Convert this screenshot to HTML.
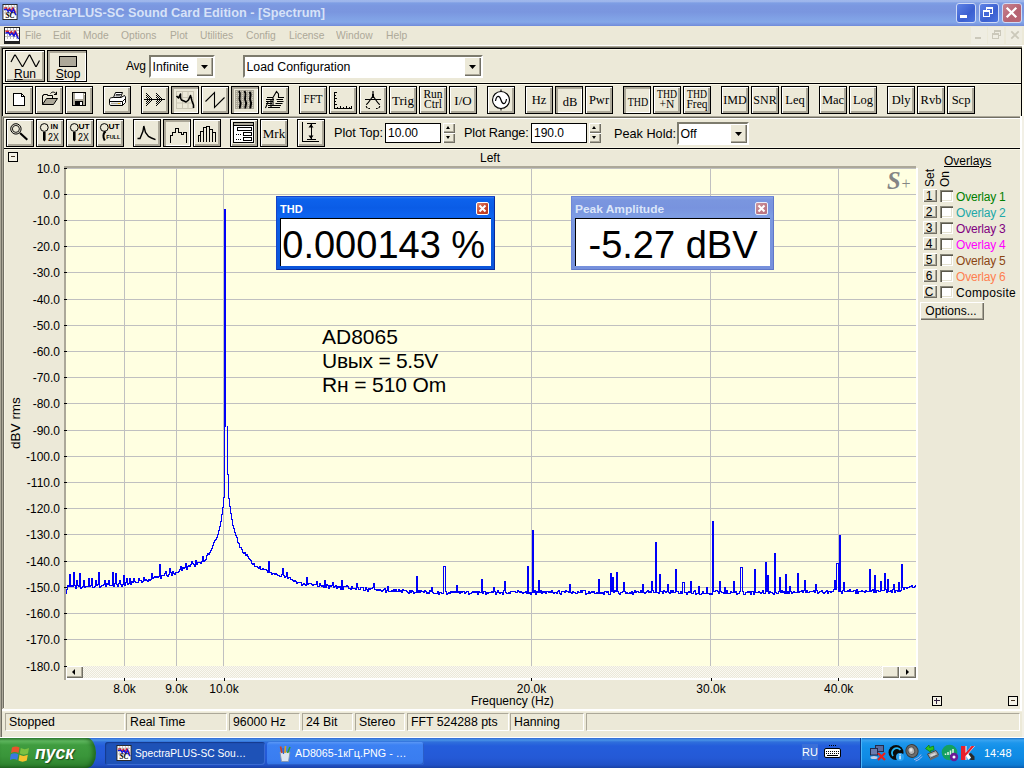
<!DOCTYPE html>
<html><head><meta charset="utf-8"><title>SpectraPLUS-SC</title>
<style>
*{box-sizing:border-box}
html,body{margin:0;padding:0}
body{width:1024px;height:768px;overflow:hidden;background:#ece9d8;font-family:"Liberation Sans",sans-serif;font-size:12px;color:#000;position:relative}
.a{position:absolute}
#title{left:0;top:0;width:1024px;height:26px;background:linear-gradient(to bottom,#9fb7ec 0,#9db5eb 1.5px,#7e9ee4 3px,#7b97e0 6px,#7a96df 12px,#7f9fe4 17px,#83a7e8 22px,#7c9ae2 24px,#6f8ad9 26px)}
#title .t{left:22px;top:3px;font-weight:bold;font-size:13.5px;color:#d6e2f8;white-space:nowrap;letter-spacing:0px;line-height:20px;transform:scaleX(.942);transform-origin:0 0}
.cb{top:2.5px;width:19.5px;height:20px;border-radius:3px;border:1px solid #cfdaf6}
#menu{left:0;top:26px;width:1024px;height:20px;background:#ece9d8}
#menu span{position:absolute;top:2px;color:#aca899;font-size:11px;line-height:14px;white-space:nowrap;transform:scaleX(.935);transform-origin:0 0}
.tb{position:absolute;width:28px;height:28px;background:#ece9d8;border:1px solid #000;box-shadow:inset 1px 1px 0 #fff,inset -1px -1px 0 #aca899,inset -2px -2px 0 #aca899}
.tb.p{box-shadow:inset 1px 1px 0 #aca899,inset 2px 2px 0 #aca899,inset -1px -1px 0 #fff;background:#ece9d8}
.tb svg{position:absolute;left:-1px;top:-1px}
.tb.p svg{left:0;top:0}
.lbl{position:absolute;font-size:12.7px;line-height:16px;white-space:nowrap}
.inp{position:absolute;background:#fff;border:1px solid #000;font-size:12px;line-height:18px;padding-left:2px;height:20px}
.combo{position:absolute;background:#fff;height:23px;border-style:solid;border-width:2px;border-color:#7d7b6d #fff #fff #7d7b6d;font-size:12.3px;line-height:20px;padding-left:1.5px;white-space:nowrap}
.dd{position:absolute;right:0;top:0;width:17px;height:19px;background:#ece9d8;box-shadow:inset 1px 1px 0 #fff,inset -1px -1px 0 #716f64,inset -2px -2px 0 #aca899}
.dd:after{content:"";position:absolute;left:5px;top:8px;width:7px;height:4px;background:#000;clip-path:polygon(0 0,100% 0,50% 100%)}
.spin{position:absolute;width:12px;height:20px}
.spin i{position:absolute;left:0;width:12px;height:10px;background:#ece9d8;box-shadow:inset 1px 1px 0 #fff,inset -1px -1px 0 #716f64,inset -2px -2px 0 #aca899}
.spin i:after{content:"";position:absolute;left:3px;top:3px;border:2.5px solid transparent}
.spin i.u:after{border-bottom:3px solid #000;border-top:none}
.spin i.d:after{border-top:3px solid #000;border-bottom:none;top:3px}
.yl{position:absolute;left:10px;width:50px;text-align:right;font-size:12px;line-height:15px}
.xl{position:absolute;top:682px;width:60px;text-align:center;font-size:12px;line-height:15px}
.ob{position:absolute;left:923px;width:14px;height:13px;background:#ece9d8;box-shadow:inset 1px 1px 0 #fff,inset -1px -1px 0 #716f64,inset -2px -2px 0 #aca899;font-size:12px;line-height:14px;overflow:hidden;text-align:center;padding-right:2px}
.oc{position:absolute;left:940px;width:13px;height:12px;background:#fff;box-shadow:inset 1px 1px 0 #8a887a,inset 2px 2px 0 #5a584c,inset -1px -1px 0 #fff,inset -2px -2px 0 #e4e1d0}
.ot{position:absolute;left:956px;font-size:12px;line-height:15px;white-space:nowrap;margin-top:1px}
.sp{position:absolute;top:713px;height:18px;border:1px solid;border-color:#aca899 #fff #fff #aca899;font-size:12.3px;line-height:16px;padding-left:3px;white-space:nowrap}
.mw{position:absolute;height:74px}
.mw .ti{position:absolute;left:4px;top:7px;font-weight:bold;font-size:11px;line-height:12px;white-space:nowrap}
.mw .x{position:absolute;top:6px;width:13px;height:13px;border:1px solid #fff;border-radius:2px}
.mw .v{position:absolute;left:4px;top:22px;bottom:4px;right:4px;background:#fff;border-top:1px solid #000;border-left:1px solid #000;font-size:38px;line-height:53px;white-space:nowrap;text-align:left;overflow:hidden}
.tk{position:absolute;top:742px;height:23px;border-radius:3px;color:#fff;font-size:11.5px;line-height:21px;white-space:nowrap}
</style></head><body>

<!-- title bar -->
<div id="title" class="a">
  <div class="a" style="left:2px;top:4px"><svg width="16" height="16" viewBox="0 0 16 17"><rect x="0.500" y="0.500" width="15" height="16" fill="#fff" stroke="#222"/><path d="M3.500 1 V12 M6.500 1 V12 M9.500 1 V12 M12.500 1 V12 M1 3.500 H15 M1 6.500 H15 M1 9.500 H15" stroke="#bbb" stroke-width="1"/><path d="M1.500 4.500 L4 4 L5.500 6.500 L7.500 4.500 L9 7.500 L11 4 L12.500 6.500 L14 9" fill="none" stroke="#e02020" stroke-width="1.3"/><path d="M1.500 6 L4.500 5.500 L6 8 L8 6 L10 9 L11.500 5.500 L13 9 L14.500 12" fill="none" stroke="#1010e0" stroke-width="1.400"/><text x="8" y="15" text-anchor="middle" font-family="Liberation Serif" font-style="italic" font-weight="bold" font-size="8" fill="#000">SC</text></svg></div>
  <div class="t a">SpectraPLUS-SC Sound Card Edition - [Spectrum]</div>
  <div class="cb a" style="left:956px;background:linear-gradient(135deg,#5f83e6,#3b5fd0 60%,#4a73e0)"><div class="a" style="left:3px;top:11px;width:7px;height:3px;background:#fff"></div></div>
  <div class="cb a" style="left:979px;background:linear-gradient(135deg,#5f83e6,#3b5fd0 60%,#4a73e0)">
    <div class="a" style="left:6px;top:3px;width:7px;height:7px;border:1px solid #fff;border-top-width:2px"></div>
    <div class="a" style="left:3px;top:6px;width:7px;height:7px;border:1px solid #fff;border-top-width:2px;background:#4468d8"></div>
  </div>
  <div class="cb a" style="left:1002px;background:linear-gradient(135deg,#c88390,#b56271 60%,#ba6674)">
    <svg class="a" style="left:0;top:0" width="18" height="18" viewBox="0 0 18 18"><path d="M3.700 3.700 L13.300 13.300 M13.300 3.700 L3.700 13.300" stroke="#fff" stroke-width="2.300"/></svg>
  </div>
</div>

<!-- menu bar -->
<div id="menu" class="a">
  <div class="a" style="left:4px;top:1px"><svg width="16" height="17" viewBox="0 0 16 17"><rect x="0.500" y="0.500" width="15" height="16" fill="#fff" stroke="#222"/><path d="M3.500 1 V12 M6.500 1 V12 M9.500 1 V12 M12.500 1 V12 M1 3.500 H15 M1 6.500 H15 M1 9.500 H15" stroke="#bbb" stroke-width="1"/><path d="M1.500 4.500 L4 4 L5.500 6.500 L7.500 4.500 L9 7.500 L11 4 L12.500 6.500 L14 9" fill="none" stroke="#e02020" stroke-width="1.3"/><path d="M1.500 6 L4.500 5.500 L6 8 L8 6 L10 9 L11.500 5.500 L13 9 L14.500 12" fill="none" stroke="#1010e0" stroke-width="1.400"/><rect x="1" y="14" width="14" height="2.500" fill="#222"/></svg></div>
  <span style="left:25px">File</span><span style="left:53px">Edit</span><span style="left:83px">Mode</span><span style="left:121px">Options</span>
  <span style="left:170px">Plot</span><span style="left:200px">Utilities</span><span style="left:246px">Config</span><span style="left:289px">License</span>
  <span style="left:336px">Window</span><span style="left:386px">Help</span>
  <div class="a" style="left:971px;top:1px;width:16px;height:17px;background:#efede2"></div><div class="a" style="left:988px;top:1px;width:16px;height:17px;background:#efede2"></div><div class="a" style="left:1006px;top:1px;width:16px;height:17px;background:#efede2"></div><div class="a" style="left:975px;top:11px;width:6px;height:2px;background:#cbc8ba"></div>
  <div class="a" style="left:994px;top:4px;width:7px;height:6px;border:1px solid #cbc8ba;border-top-width:2px"></div>
  <div class="a" style="left:992px;top:7px;width:7px;height:6px;border:1px solid #cbc8ba;border-top-width:2px;background:#efede2"></div>
  <svg class="a" style="left:1010px;top:4px" width="10" height="10" viewBox="0 0 10 10"><path d="M1.300 1.300 L8.700 8.700 M8.700 1.300 L1.300 8.700" stroke="#cbc8ba" stroke-width="1.800"/></svg>
</div>
<div class="a" style="left:0;top:45px;width:1024px;height:1px;background:#fff"></div>
<!-- window frame edges -->
<div class="a" style="left:0;top:46px;width:1022px;height:1px;background:#aca899"></div>
<div class="a" style="left:1px;top:47px;width:1021px;height:1px;background:#716f64"></div>
<div class="a" style="left:0;top:46px;width:1px;height:692px;background:#aca899"></div>
<div class="a" style="left:1px;top:47px;width:1px;height:691px;background:#716f64"></div>
<div class="a" style="left:1022px;top:46px;width:2px;height:70px;background:#fffef4"></div>
<div class="a" style="left:1022px;top:116px;width:2px;height:622px;background:#f2f0e6"></div>
<!-- toolbar frame (rows 1-2) -->
<div class="a" style="left:2px;top:48px;width:1020px;height:1px;background:#000"></div>
<div class="a" style="left:2px;top:49px;width:1019px;height:1px;background:#fbf8e8"></div>
<div class="a" style="left:2px;top:48px;width:1px;height:68px;background:#000"></div>
<div class="a" style="left:3px;top:49px;width:1px;height:67px;background:#fbf8e8"></div>
<div class="a" style="left:1021px;top:48px;width:1px;height:68px;background:#000"></div>
<div class="a" style="left:2px;top:83px;width:1020px;height:1px;background:#000"></div>
<div class="a" style="left:3px;top:84px;width:1018px;height:1px;background:#fbf8e8"></div>
<div class="a" style="left:3px;top:82px;width:1018px;height:1px;background:#fbf8e8"></div>
<!-- MDI child sunken edge -->
<div class="a" style="left:2px;top:116px;width:1018px;height:1px;background:#aca899"></div>
<div class="a" style="left:3px;top:117px;width:1017px;height:1px;background:#716f64"></div>
<div class="a" style="left:4px;top:118px;width:1016px;height:1px;background:#fff"></div>
<div class="a" style="left:2px;top:116px;width:1px;height:593px;background:#aca899"></div>
<div class="a" style="left:3px;top:117px;width:1px;height:591px;background:#716f64"></div>
<div class="a" style="left:4px;top:118px;width:1px;height:590px;background:#f6f3e4"></div>
<div class="a" style="left:1020px;top:116px;width:2px;height:595px;background:#fff"></div>
<div class="a" style="left:4px;top:148px;width:1016px;height:1px;background:#000"></div>
<div class="a" style="left:4px;top:147px;width:1016px;height:1px;background:#f8f5e6"></div>
<div class="a" style="left:4px;top:149px;width:1016px;height:1px;background:#fbf8e8"></div>

<!-- row 1 -->
<div class="tb" style="left:5px;top:50px;width:40px;height:32px"><svg width="40" height="32" viewBox="0 0 40 32"><path d="M6 12 L9.700 5 L10.300 5 L17.200 16.500 L17.800 16.500 L24.200 5 L24.800 5 L30.700 16.500 L31.300 16.500 L34.500 10.500" fill="none" stroke="#000" stroke-width="1.2" stroke-linejoin="round"/></svg><div class="a" style="left:0;top:15px;width:38px;text-align:center;font-size:12px;line-height:16px"><u>R</u>un</div></div>
<div class="tb p" style="left:47px;top:50px;width:40px;height:32px"><div class="a" style="left:11px;top:5px;width:18px;height:11px;background:#aca899;border:1px solid #000"></div><div class="a" style="left:1px;top:15px;width:38px;text-align:center;font-size:12px;line-height:16px"><u>S</u>top</div></div>
<div class="lbl" style="left:126px;top:58px;font-size:12px;letter-spacing:-0.3px">Avg</div>
<div class="combo" style="left:149px;top:55px;width:66px">Infinite<div class="dd"></div></div>
<div class="combo" style="left:243px;top:55px;width:240px">Load Configuration<div class="dd"></div></div>

<!-- rows 2,3 -->
<div class="tb" style="left:5px;top:86px"><svg width="28" height="28" viewBox="0 0 28 28" shape-rendering="crispEdges"><path d="M8.5 7.5 H16.5 L19.5 10.5 V19.5 H8.5 Z" fill="#fff" stroke="#000" stroke-width="1"/><path d="M16.5 7.5 V10.5 H19.5" fill="none" stroke="#000" stroke-width="1"/></svg></div><div class="tb" style="left:35px;top:86px"><svg width="28" height="28" viewBox="0 0 28 28" ><path d="M7.5 18.5 V9.5 H8.5 V8.5 H12.5 V9.5 H17.5 V12.5" fill="#ece9d8" stroke="#000" stroke-width="1"/><path d="M7.5 18.5 L11.5 12.5 H22.5 L18.5 18.5 Z" fill="#aca899" stroke="#000" stroke-width="1"/><path d="M15.5 7.5 C17 5.5 20 5.5 21.5 8.5 M21.5 8.5 V5.8 M21.5 8.5 H19" fill="none" stroke="#000" stroke-width="1"/></svg></div><div class="tb" style="left:65px;top:86px"><svg width="28" height="28" viewBox="0 0 28 28" shape-rendering="crispEdges"><rect x="7.5" y="6.5" width="13" height="13" fill="#aca899" stroke="#000"/><rect x="10" y="7" width="8" height="6" fill="#fff"/><rect x="10" y="15" width="8" height="4" fill="#000"/><rect x="15" y="16" width="2" height="3" fill="#fff"/><rect x="19" y="8" width="1" height="1" fill="#fff"/></svg></div><div class="tb" style="left:103px;top:86px"><svg width="28" height="28" viewBox="0 0 28 28" ><path d="M10.5 11.5 L12.5 6.5 H19.5 L17.5 11.5 Z" fill="#fff" stroke="#000"/><path d="M13 8.5 H18 M12.5 9.8 H17" stroke="#000" stroke-width="0.8"/><path d="M6.5 14 C6.5 12 8 11.5 10.5 11.5 H18 L21.5 9.5 L22.5 11 V16.5 L19.5 19.5 H8 C6.5 19.5 6.5 18 6.5 17 Z" fill="#fff" stroke="#000"/><path d="M6.5 15.5 H19.5 L22.5 12.5 M19.5 15.5 V19.5" fill="none" stroke="#000"/><path d="M8 17.5 H18" stroke="#aca899" stroke-width="1.6"/><rect x="15" y="17" width="2" height="1" fill="#d8a000"/></svg></div><div class="tb" style="left:141px;top:86px"><svg width="28" height="28" viewBox="0 0 28 28" shape-rendering="crispEdges"><defs><pattern id="dt" width="2" height="2" patternUnits="userSpaceOnUse"><rect width="1" height="1" fill="#000"/><rect x="1" y="1" width="1" height="1" fill="#000"/></pattern></defs><path d="M5 5 L13 13.5 L5 22 Z" fill="url(#dt)"/><path d="M15 7 L22 13.5 L15 20 Z" fill="url(#dt)"/><path d="M3 13.5 H24" stroke="#000" stroke-width="1"/></svg></div><div class="tb p" style="left:171px;top:86px"><svg width="28" height="28" viewBox="0 0 28 28" ><g transform="translate(-1,-1)"><rect x="5.5" y="5.5" width="17" height="17" fill="#ece9d8" stroke="#c9c5b4" stroke-width="1"/><path d="M11.5 5.5 V22.5 M17 5.5 V22.5 M5.5 11.5 H22.5 M5.5 17 H22.5" stroke="#c9c5b4" stroke-width="1"/><path d="M5.5 10 L7.5 12 L9.5 8 V12 L10.5 14 L13 15 L15 16 L17.5 14 L19.5 9.5 L21 15 L22.5 19 V22" fill="none" stroke="#000" stroke-width="1.6" stroke-linejoin="round"/></g></svg></div><div class="tb" style="left:201px;top:86px"><svg width="28" height="28" viewBox="0 0 28 28" ><path d="M4.500 15.5 L13.5 6.5 V21.5 L23.5 11.500" fill="none" stroke="#000" stroke-width="1.1"/></svg></div><div class="tb p" style="left:231px;top:86px"><svg width="28" height="28" viewBox="0 0 28 28" ><defs><pattern id="dt2" width="2" height="2" patternUnits="userSpaceOnUse"><rect width="2" height="2" fill="#aca899"/><rect width="1" height="1" fill="#d8d4c4"/></pattern></defs><rect x="3" y="3" width="19" height="19" fill="url(#dt2)" shape-rendering="crispEdges"/><path d="M7 4 C10 8 6 11 8 14 C10 17 7 19 8 21.500" fill="none" stroke="#000" stroke-width="1.9"/><path d="M12.500 4 C15.500 8 11.500 11 13.500 14 C15.500 17 12.500 19 13.500 21.500" fill="none" stroke="#000" stroke-width="1.9"/><path d="M17.500 5 C20.500 8 16.500 11 18.500 14 C20.500 17 17.500 19 18.500 21.500" fill="none" stroke="#000" stroke-width="1.9"/></svg></div><div class="tb" style="left:261px;top:86px"><svg width="28" height="28" viewBox="0 0 28 28" ><path d="M6 11.500 H12 L15.500 5.500 L17.500 8 V11.500 H23 M5 13.500 H13 M15.500 13.500 H22 M5 15.500 H12 M16 15.500 H22.500 M5 17.500 H11 M14.500 17.500 H21.500 M7 19.500 H20 M7 21.500 H19 M4.500 22 L7 16 M12 12 V19 M10 14 V21" fill="none" stroke="#000" stroke-width="1.1"/></svg></div><div class="tb" style="left:299px;top:86px"><svg width="28" height="28" viewBox="0 0 28 28" ><text x="14" y="16.8" text-anchor="middle" font-family="Liberation Serif" font-size="11.5" font-weight="normal" letter-spacing="0" fill="#000" textLength="19" lengthAdjust="spacingAndGlyphs">FFT</text></svg></div><div class="tb" style="left:329px;top:86px"><svg width="28" height="28" viewBox="0 0 28 28" ><path d="M5.5 6 V22.5 H23 M5.5 6.5 H8 M5.5 9.5 H7 M5.5 12.5 H8 M5.5 15.5 H7 M5.5 18.5 H8 M8.5 22.5 V21 M11.5 22.5 V20 M14.5 22.5 V21 M17.5 22.5 V20 M20.5 22.5 V21 M22.5 22.5 V19.5" fill="none" stroke="#000" stroke-width="1" shape-rendering="crispEdges"/></svg></div><div class="tb" style="left:359px;top:86px"><svg width="28" height="28" viewBox="0 0 28 28" ><path d="M14 5 V11 M6 13.500 H22 M14 10 L9 17 M14 10 L19 17" fill="none" stroke="#000" stroke-width="1.2"/><path d="M9 17 C6 19 7 23 11 22.500 M19 17 C22 19 21 23 17 22.500" fill="none" stroke="#000" stroke-width="1.1" stroke-dasharray="2.5 1"/><rect x="13" y="8" width="2" height="4" fill="#000"/></svg></div><div class="tb" style="left:389px;top:86px"><svg width="28" height="28" viewBox="0 0 28 28" ><text x="14" y="18.5" text-anchor="middle" font-family="Liberation Serif" font-size="13" font-weight="normal" letter-spacing="0" fill="#000">Trig</text></svg></div><div class="tb" style="left:419px;top:86px"><svg width="28" height="28" viewBox="0 0 28 28" ><text x="14" y="11.5" text-anchor="middle" font-family="Liberation Serif" font-size="11.5" font-weight="normal" letter-spacing="0" fill="#000">Run</text><text x="14" y="21.5" text-anchor="middle" font-family="Liberation Serif" font-size="11.5" font-weight="normal" letter-spacing="0" fill="#000">Ctrl</text></svg></div><div class="tb" style="left:449px;top:86px"><svg width="28" height="28" viewBox="0 0 28 28" ><text x="14" y="18.5" text-anchor="middle" font-family="Liberation Serif" font-size="13" font-weight="normal" letter-spacing="0" fill="#000">I/O</text></svg></div><div class="tb" style="left:487px;top:86px"><svg width="28" height="28" viewBox="0 0 28 28" ><circle cx="14" cy="14" r="8.5" fill="#fff" stroke="#000" stroke-width="1.1"/><path d="M14 3.500 V5.500 M14 22.500 V24.500" stroke="#000" stroke-width="1.1"/><path d="M8.500 15 C9.500 9 12.500 9 14 14 C15.500 19 18.500 19 19.500 13" fill="none" stroke="#000" stroke-width="1.2"/></svg></div><div class="tb" style="left:525px;top:86px"><svg width="28" height="28" viewBox="0 0 28 28" ><text x="14" y="18.0" text-anchor="middle" font-family="Liberation Serif" font-size="12.5" font-weight="normal" letter-spacing="0" fill="#000">Hz</text></svg></div><div class="tb p" style="left:555px;top:86px"><svg width="28" height="28" viewBox="0 0 28 28" ><text x="14" y="19.0" text-anchor="middle" font-family="Liberation Serif" font-size="12.5" font-weight="normal" letter-spacing="0" fill="#000">dB</text></svg></div><div class="tb" style="left:585px;top:86px"><svg width="28" height="28" viewBox="0 0 28 28" ><text x="14" y="18.0" text-anchor="middle" font-family="Liberation Serif" font-size="12.5" font-weight="normal" letter-spacing="0" fill="#000">Pwr</text></svg></div><div class="tb p" style="left:623px;top:86px"><svg width="28" height="28" viewBox="0 0 28 28" ><text x="14" y="18.5" text-anchor="middle" font-family="Liberation Serif" font-size="12" font-weight="normal" letter-spacing="0" fill="#000" textLength="20.5" lengthAdjust="spacingAndGlyphs">THD</text></svg></div><div class="tb" style="left:653px;top:86px"><svg width="28" height="28" viewBox="0 0 28 28" ><text x="14" y="11.5" text-anchor="middle" font-family="Liberation Serif" font-size="11.5" font-weight="normal" letter-spacing="0" fill="#000" textLength="20" lengthAdjust="spacingAndGlyphs">THD</text><text x="14" y="21.5" text-anchor="middle" font-family="Liberation Serif" font-size="11.5" font-weight="normal" letter-spacing="0" fill="#000">+N</text></svg></div><div class="tb" style="left:683px;top:86px"><svg width="28" height="28" viewBox="0 0 28 28" ><text x="14" y="11.5" text-anchor="middle" font-family="Liberation Serif" font-size="11.5" font-weight="normal" letter-spacing="0" fill="#000" textLength="20" lengthAdjust="spacingAndGlyphs">THD</text><text x="14" y="21.5" text-anchor="middle" font-family="Liberation Serif" font-size="11.5" font-weight="normal" letter-spacing="0" fill="#000">Freq</text></svg></div><div class="tb" style="left:721px;top:86px"><svg width="28" height="28" viewBox="0 0 28 28" ><text x="14" y="18.0" text-anchor="middle" font-family="Liberation Serif" font-size="12" font-weight="normal" letter-spacing="0" fill="#000">IMD</text></svg></div><div class="tb" style="left:751px;top:86px"><svg width="28" height="28" viewBox="0 0 28 28" ><text x="14" y="18.0" text-anchor="middle" font-family="Liberation Serif" font-size="12" font-weight="normal" letter-spacing="0" fill="#000">SNR</text></svg></div><div class="tb" style="left:781px;top:86px"><svg width="28" height="28" viewBox="0 0 28 28" ><text x="14" y="18.0" text-anchor="middle" font-family="Liberation Serif" font-size="12.5" font-weight="normal" letter-spacing="0" fill="#000">Leq</text></svg></div><div class="tb" style="left:819px;top:86px"><svg width="28" height="28" viewBox="0 0 28 28" ><text x="14" y="18.0" text-anchor="middle" font-family="Liberation Serif" font-size="12.5" font-weight="normal" letter-spacing="0" fill="#000">Mac</text></svg></div><div class="tb" style="left:849px;top:86px"><svg width="28" height="28" viewBox="0 0 28 28" ><text x="14" y="18.0" text-anchor="middle" font-family="Liberation Serif" font-size="12.5" font-weight="normal" letter-spacing="0" fill="#000">Log</text></svg></div><div class="tb" style="left:887px;top:86px"><svg width="28" height="28" viewBox="0 0 28 28" ><text x="14" y="18.0" text-anchor="middle" font-family="Liberation Serif" font-size="12.5" font-weight="normal" letter-spacing="0" fill="#000">Dly</text></svg></div><div class="tb" style="left:917px;top:86px"><svg width="28" height="28" viewBox="0 0 28 28" ><text x="14" y="18.0" text-anchor="middle" font-family="Liberation Serif" font-size="12.5" font-weight="normal" letter-spacing="0" fill="#000">Rvb</text></svg></div><div class="tb" style="left:947px;top:86px"><svg width="28" height="28" viewBox="0 0 28 28" ><text x="14" y="18.0" text-anchor="middle" font-family="Liberation Serif" font-size="12.5" font-weight="normal" letter-spacing="0" fill="#000">Scp</text></svg></div><div class="tb" style="left:6px;top:119px"><svg width="28" height="28" viewBox="0 0 28 28" ><circle cx="9.900" cy="9.900" r="5.200" fill="none" stroke="#000" stroke-width="1"/><circle cx="9.900" cy="9.900" r="3.500" fill="none" stroke="#000" stroke-width="0.9"/><path d="M14 14 L21.300 20.800" stroke="#000" stroke-width="2.1"/></svg></div><div class="tb" style="left:36px;top:119px"><svg width="28" height="28" viewBox="0 0 28 28" ><circle cx="8.300" cy="8.500" r="3.900" fill="none" stroke="#000" stroke-width="1"/><path d="M7 13 H9.600 V21 L8.300 22.600 L7 21 Z" fill="#000"/><text x="14.6" y="10.3" font-family="Liberation Sans" font-size="7" font-weight="bold" fill="#000" textLength="7.4" lengthAdjust="spacingAndGlyphs">IN</text><text x="12" y="22" font-family="Liberation Sans" font-size="10.5" fill="#000" textLength="10.800" lengthAdjust="spacingAndGlyphs">2X</text></svg></div><div class="tb" style="left:66px;top:119px"><svg width="28" height="28" viewBox="0 0 28 28" ><circle cx="8.300" cy="8.500" r="3.900" fill="none" stroke="#000" stroke-width="1"/><path d="M7 13 H9.600 V21 L8.300 22.600 L7 21 Z" fill="#000"/><text x="12.5" y="10.3" font-family="Liberation Sans" font-size="7" font-weight="bold" fill="#000" textLength="11.2" lengthAdjust="spacingAndGlyphs">UT</text><text x="12" y="22" font-family="Liberation Sans" font-size="10.5" fill="#000" textLength="10.800" lengthAdjust="spacingAndGlyphs">2X</text></svg></div><div class="tb" style="left:96px;top:119px"><svg width="28" height="28" viewBox="0 0 28 28" ><circle cx="8.300" cy="8.500" r="3.900" fill="none" stroke="#000" stroke-width="1"/><path d="M9.500 12.300 C7 14.500 7 18.500 8.800 21.500" stroke="#000" stroke-width="2.2" fill="none"/><text x="12.500" y="10.300" font-family="Liberation Sans" font-size="7" font-weight="bold" fill="#000" textLength="11.200" lengthAdjust="spacingAndGlyphs">UT</text><text x="10.300" y="20.200" font-family="Liberation Sans" font-size="6.200" font-weight="bold" fill="#000" textLength="14" lengthAdjust="spacingAndGlyphs">FULL</text></svg></div><div class="tb" style="left:133px;top:119px"><svg width="28" height="28" viewBox="0 0 28 28" ><path d="M4.500 19.500 H7 L10 12 L10.800 7 L12.500 13.500 L15.500 17.500 L18.500 19 L22.500 20.700" fill="none" stroke="#000" stroke-width="1.4"/></svg></div><div class="tb p" style="left:163px;top:119px"><svg width="28" height="28" viewBox="0 0 28 28" ><path d="M6.500 22.500 V15.500 H8.500 V12.500 H11.500 V8.500 H14.500 V12.500 H17.500 V14.500 H19.500 V12.500 H22.500 V22.500" fill="none" stroke="#000" stroke-width="1" shape-rendering="crispEdges"/></svg></div><div class="tb" style="left:193px;top:119px"><svg width="28" height="28" viewBox="0 0 28 28" ><path d="M5.500 22.500 V16.500 H7.500 V22.500 M7.500 16.500 V12.500 H10.500 V22.500 M10.500 12.500 V8.500 H13.500 V22.500 M13.500 8.500 V7.500 H16.500 V22.500 M16.500 10.500 H19.500 V22.500 M19.500 13.500 H22.500 V22.500" fill="none" stroke="#000" stroke-width="1" shape-rendering="crispEdges"/></svg></div><div class="tb" style="left:230px;top:119px"><svg width="28" height="28" viewBox="0 0 28 28" shape-rendering="crispEdges"><rect x="3.500" y="3.500" width="20" height="20" fill="#fff" stroke="#000"/><rect x="4" y="4" width="19" height="2" fill="#aca899"/><path d="M3.500 6.500 H23.500" stroke="#000"/><rect x="7.500" y="8.500" width="14" height="3" fill="#fff" stroke="#000"/><rect x="13.500" y="13.500" width="8" height="3" fill="#fff" stroke="#000"/><rect x="13.500" y="18.500" width="8" height="3" fill="#fff" stroke="#000"/><path d="M6 15.500 H12 M6 20.500 H12" stroke="#000" stroke-dasharray="1 1"/></svg></div><div class="tb" style="left:260px;top:119px"><svg width="28" height="28" viewBox="0 0 28 28" ><text x="14" y="18.5" text-anchor="middle" font-family="Liberation Serif" font-size="13" font-weight="normal" letter-spacing="0" fill="#000">Mrk</text></svg></div><div class="tb" style="left:297px;top:119px"><svg width="28" height="28" viewBox="0 0 28 28" ><path d="M5.500 3 V22.500 H22 M9.500 4.500 H18.500 M9.500 20.500 H18.500 M14 4.500 V20.500" fill="none" stroke="#000" stroke-width="1" shape-rendering="crispEdges"/><path d="M11.500 8.500 L14 5 L16.500 8.500 Z M11.500 16.500 L14 20 L16.500 16.500 Z" fill="#000"/></svg></div>
<div class="lbl" style="left:334px;top:125px">Plot Top:</div>
<div class="inp" style="left:385px;top:123px;width:56px">10.00</div>
<div class="spin" style="left:443px;top:123px"><i class="u" style="top:0"></i><i class="d" style="top:10px"></i></div>
<div class="lbl" style="left:464px;top:125px;letter-spacing:-0.15px">Plot Range:</div>
<div class="inp" style="left:531px;top:123px;width:56px">190.0</div>
<div class="spin" style="left:589px;top:123px"><i class="u" style="top:0"></i><i class="d" style="top:10px"></i></div>
<div class="lbl" style="left:614px;top:126px">Peak Hold:</div>
<div class="combo" style="left:677px;top:122px;width:72px">Off<div class="dd"></div></div>

<!-- plot -->
<div class="a" style="left:8px;top:152px;width:10px;height:10px;border:1px solid #000;background:#f4f2e6"><div class="a" style="left:2px;top:3px;width:4px;height:1px;background:#403020"></div></div>
<div class="lbl" style="left:480px;top:151px;font-size:12px;line-height:14px">Left</div>
<div class="a" style="left:64px;top:168px;width:854px;height:512px;background:#fff"></div>
<div class="a" style="left:64px;top:166px;width:852px;height:514px;background:#aca899"></div>
<div class="a" style="left:66px;top:168px;width:850px;height:498px;background:#ffffe1"></div>
<div class="a" style="left:66px;top:678px;width:852px;height:2px;background:#fff"></div>
<!-- scrollbar -->
<div class="a" style="left:66px;top:666px;width:850px;height:12px;background:#faf9f2;background-image:linear-gradient(45deg,#ebe8d9 25%,transparent 25%,transparent 75%,#ebe8d9 75%),linear-gradient(45deg,#ebe8d9 25%,transparent 25%,transparent 75%,#ebe8d9 75%);background-size:2px 2px;background-position:0 0,1px 1px"></div>
<div class="a" style="left:66px;top:666px;width:17px;height:12px;background:#ece9d8;box-shadow:inset 1px 1px 0 #fff,inset -1px -1px 0 #716f64,inset -2px -2px 0 #aca899"><div class="a" style="left:6px;top:3px;border:3px solid transparent;border-right:3px solid #000;border-left:none"></div></div>
<div class="a" style="left:882px;top:666px;width:17px;height:12px;background:#ece9d8;box-shadow:inset 1px 1px 0 #fff,inset -1px -1px 0 #716f64,inset -2px -2px 0 #aca899"></div>
<div class="a" style="left:899px;top:666px;width:17px;height:12px;background:#ece9d8;box-shadow:inset 1px 1px 0 #fff,inset -1px -1px 0 #716f64,inset -2px -2px 0 #aca899"><div class="a" style="left:7px;top:3px;border:3px solid transparent;border-left:3px solid #000;border-right:none"></div></div>

<svg class="a" style="left:0;top:0" width="1024" height="768" viewBox="0 0 1024 768">
<g shape-rendering="crispEdges"><rect x="66" y="168" width="850" height="1" fill="#c0c0c0"/><rect x="66" y="194" width="850" height="1" fill="#c0c0c0"/><rect x="66" y="220" width="850" height="1" fill="#c0c0c0"/><rect x="66" y="246" width="850" height="1" fill="#c0c0c0"/><rect x="66" y="272" width="850" height="1" fill="#c0c0c0"/><rect x="66" y="299" width="850" height="1" fill="#c0c0c0"/><rect x="66" y="325" width="850" height="1" fill="#c0c0c0"/><rect x="66" y="351" width="850" height="1" fill="#c0c0c0"/><rect x="66" y="377" width="850" height="1" fill="#c0c0c0"/><rect x="66" y="403" width="850" height="1" fill="#c0c0c0"/><rect x="66" y="430" width="850" height="1" fill="#c0c0c0"/><rect x="66" y="456" width="850" height="1" fill="#c0c0c0"/><rect x="66" y="482" width="850" height="1" fill="#c0c0c0"/><rect x="66" y="508" width="850" height="1" fill="#c0c0c0"/><rect x="66" y="534" width="850" height="1" fill="#c0c0c0"/><rect x="66" y="561" width="850" height="1" fill="#c0c0c0"/><rect x="66" y="587" width="850" height="1" fill="#c0c0c0"/><rect x="66" y="613" width="850" height="1" fill="#c0c0c0"/><rect x="66" y="639" width="850" height="1" fill="#c0c0c0"/><rect x="124" y="169" width="1" height="497" fill="#c0c0c0"/><rect x="176" y="169" width="1" height="497" fill="#c0c0c0"/><rect x="223" y="169" width="1" height="497" fill="#c0c0c0"/><rect x="531" y="169" width="1" height="497" fill="#c0c0c0"/><rect x="710" y="169" width="1" height="497" fill="#c0c0c0"/><rect x="838" y="169" width="1" height="497" fill="#c0c0c0"/><rect x="64" y="168" width="3" height="1" fill="#000"/><rect x="64" y="194" width="3" height="1" fill="#000"/><rect x="64" y="220" width="3" height="1" fill="#000"/><rect x="64" y="246" width="3" height="1" fill="#000"/><rect x="64" y="272" width="3" height="1" fill="#000"/><rect x="64" y="299" width="3" height="1" fill="#000"/><rect x="64" y="325" width="3" height="1" fill="#000"/><rect x="64" y="351" width="3" height="1" fill="#000"/><rect x="64" y="377" width="3" height="1" fill="#000"/><rect x="64" y="403" width="3" height="1" fill="#000"/><rect x="64" y="430" width="3" height="1" fill="#000"/><rect x="64" y="456" width="3" height="1" fill="#000"/><rect x="64" y="482" width="3" height="1" fill="#000"/><rect x="64" y="508" width="3" height="1" fill="#000"/><rect x="64" y="534" width="3" height="1" fill="#000"/><rect x="64" y="561" width="3" height="1" fill="#000"/><rect x="64" y="587" width="3" height="1" fill="#000"/><rect x="64" y="613" width="3" height="1" fill="#000"/><rect x="64" y="639" width="3" height="1" fill="#000"/><rect x="64" y="666" width="3" height="1" fill="#000"/><rect x="124" y="678" width="1" height="3" fill="#000"/><rect x="176" y="678" width="1" height="3" fill="#000"/><rect x="224" y="678" width="1" height="3" fill="#000"/><rect x="531" y="678" width="1" height="3" fill="#000"/><rect x="711" y="678" width="1" height="3" fill="#000"/><rect x="838" y="678" width="1" height="3" fill="#000"/></g>
<g shape-rendering="crispEdges"><path d="M66.5 593.5H66.5V589.5H67.5V585.5H68.5V586.5H69.5V574.5H70.5V586.5H71.5V585.5H72.5V586.5H73.5V572.5H74.5V585.5H75.5V588.5H76.5V580.5H77.5V585.5H78.5V586.5H79.5V573.5H80.5V588.5H81.5V587.5H82.5V586.5H83.5V580.5H84.5V587.5H85.5V586.5H86.5H87.5H88.5V578.5H89.5V586.5H90.5V585.5H91.5V578.5H92.5V587.5H93.5H94.5V586.5H95.5V580.5H96.5V585.5H97.5V584.5H98.5V572.5H99.5V587.5H100.5V586.5H101.5V585.5H102.5H103.5V584.5H104.5V580.5H105.5V586.5H106.5V583.5H107.5V584.5H108.5V580.5H109.5V585.5H110.5H111.5H112.5V572.5H113.5V586.5H114.5V583.5H115.5V573.5H116.5V584.5H117.5V586.5H118.5V583.5H119.5V580.5H120.5V584.5H121.5V586.5H122.5V584.5H123.5V575.5H124.5V585.5H125.5V582.5H126.5V578.5H127.5V584.5H128.5V583.5H129.5V578.5H130.5V584.5H131.5V581.5H132.5V582.5H133.5V578.5H134.5V581.5H135.5V582.5H136.5H137.5H138.5V578.5H139.5V580.5H140.5H141.5V582.5H142.5V581.5H143.5V577.5H144.5V580.5H145.5V579.5H146.5V580.5H147.5V581.5H148.5V579.5H149.5V580.5H150.5V579.5H151.5V573.5H152.5V578.5H153.5V577.5H154.5V576.5H155.5V577.5H156.5V576.5H157.5V577.5H158.5V576.5H159.5V564.5H160.5V578.5H161.5V575.5H162.5H163.5H164.5V573.5H165.5V571.5H166.5V575.5H167.5V576.5H168.5V574.5H169.5V568.5H170.5V572.5H171.5V575.5H172.5V571.5H173.5V573.5H174.5V574.5H175.5V572.5H176.5H177.5H178.5V571.5H179.5V569.5H180.5V566.5H181.5V570.5H182.5V567.5H183.5V568.5H184.5V567.5H185.5V563.5H186.5V569.5H187.5V566.5H188.5V565.5H189.5V566.5H190.5V564.5H191.5V561.5H192.5V563.5H193.5V564.5H194.5V566.5H195.5V560.5H196.5V564.5H197.5V562.5H198.5H199.5H200.5V563.5H201.5V561.5H202.5V556.5H203.5V561.5H204.5V560.5H205.5V559.5H206.5V555.5H207.5V553.5H208.5V554.5H209.5V552.5H210.5V550.5H211.5V548.5H212.5V545.5H213.5V542.5H214.5V540.5H215.5V539.5H216.5V537.5H217.5V534.5H218.5V530.5H219.5V526.5H220.5V521.5H221.5V514.5H222.5V507.5H223.5V497.5H224.5V426.5" fill="none" stroke="#0000f8" stroke-width="1"/><path d="M226.5 426.5H227.5V474.5H228.5V498.5H229.5V506.5H230.5V513.5H231.5V519.5H232.5V525.5H233.5V528.5H234.5V532.5H235.5V535.5H236.5V537.5H237.5V542.5H238.5V543.5H239.5V547.5H240.5H241.5V549.5H242.5V552.5H243.5V553.5H244.5V552.5H245.5V555.5H246.5V554.5H247.5V556.5H248.5V558.5H249.5V559.5H250.5V560.5H251.5V563.5H252.5V564.5H253.5V563.5H254.5V566.5H255.5H256.5H257.5V567.5H258.5V568.5H259.5V566.5H260.5V569.5H261.5H262.5V568.5H263.5V569.5H264.5H265.5H266.5V570.5H267.5V572.5H268.5V561.5H269.5V572.5H270.5H271.5V574.5H272.5V573.5H273.5H274.5V574.5H275.5V573.5H276.5V574.5H277.5V575.5H278.5H279.5V576.5H280.5H281.5V574.5H282.5V568.5H283.5V575.5H284.5V577.5H285.5V576.5H286.5V572.5H287.5V578.5H288.5V577.5H289.5H290.5V579.5H291.5H292.5V580.5H293.5V581.5H294.5V580.5H295.5V581.5H296.5V583.5H297.5V582.5H298.5H299.5H300.5H301.5V585.5H302.5V584.5H303.5V583.5H304.5V584.5H305.5V585.5H306.5V577.5H307.5V584.5H308.5V583.5H309.5H310.5H311.5V584.5H312.5V585.5H313.5V584.5H314.5H315.5H316.5V581.5H317.5V586.5H318.5H319.5V583.5H320.5V585.5H321.5V586.5H322.5V585.5H323.5V587.5H324.5V580.5H325.5V587.5H326.5V584.5H327.5V585.5H328.5V588.5H329.5V585.5H330.5V586.5H331.5V585.5H332.5V582.5H333.5V587.5H334.5V586.5H335.5V585.5H336.5V588.5H337.5V586.5H338.5V587.5H339.5V586.5H340.5V589.5H341.5V580.5H342.5V589.5H343.5V586.5H344.5H345.5H346.5V585.5H347.5V586.5H348.5V588.5H349.5H350.5V589.5H351.5V586.5H352.5V588.5H353.5H354.5H355.5V589.5H356.5V583.5H357.5V587.5H358.5V589.5H359.5H360.5V587.5H361.5H362.5H363.5V590.5H364.5H365.5V587.5H366.5V589.5H367.5V591.5H368.5V588.5H369.5V589.5H370.5V588.5H371.5H372.5V587.5H373.5V583.5H374.5V589.5H375.5H376.5V590.5H377.5V589.5H378.5V590.5H379.5V589.5H380.5V590.5H381.5V591.5H382.5V590.5H383.5V589.5H384.5V588.5H385.5V592.5H386.5V590.5H387.5V586.5H388.5V591.5H389.5H390.5H391.5V590.5H392.5V591.5H393.5V589.5H394.5V591.5H395.5V589.5H396.5V591.5H397.5H398.5V589.5H399.5V591.5H400.5V590.5H401.5V592.5H402.5V589.5H403.5V590.5H404.5H405.5H406.5V591.5H407.5V592.5H408.5V593.5H409.5V590.5H410.5V592.5H411.5V590.5H412.5V591.5H413.5V593.5H414.5V592.5H415.5H416.5V576.5H417.5V592.5H418.5V590.5H419.5V592.5H420.5V590.5H421.5V591.5H422.5H423.5V592.5H424.5V590.5H425.5V591.5H426.5V593.5H427.5V592.5H428.5V593.5H429.5V590.5H430.5V591.5H431.5V587.5H432.5V592.5H433.5V593.5H434.5H435.5H436.5H437.5V591.5H438.5V594.5H439.5V592.5H440.5H441.5V593.5H442.5H443.5V566.5H444.5H445.5V591.5H446.5V594.5H447.5V593.5H448.5V592.5H449.5V593.5H450.5V591.5H451.5V592.5H452.5V591.5H453.5V592.5H454.5V591.5H455.5V592.5H456.5V585.5H457.5V592.5H458.5V591.5H459.5V593.5H460.5V591.5H461.5V592.5H462.5V591.5H463.5H464.5V593.5H465.5V592.5H466.5V591.5H467.5H468.5V594.5H469.5V593.5H470.5H471.5V592.5H472.5V591.5H473.5V592.5H474.5V591.5H475.5V592.5H476.5V591.5H477.5V594.5H478.5V591.5H479.5V592.5H480.5H481.5V579.5H482.5V593.5H483.5V591.5H484.5H485.5V594.5H486.5V592.5H487.5V593.5H488.5V592.5H489.5H490.5H491.5V591.5H492.5V592.5H493.5V587.5H494.5V591.5H495.5V594.5H496.5V592.5H497.5V590.5H498.5V592.5H499.5V593.5H500.5V592.5H501.5H502.5V594.5H503.5V590.5H504.5V581.5H505.5V592.5H506.5V593.5H507.5H508.5V592.5H509.5V593.5H510.5V591.5H511.5H512.5H513.5H514.5H515.5V592.5H516.5H517.5V590.5H518.5V591.5H519.5V592.5H520.5V591.5H521.5V592.5H522.5V593.5H523.5V592.5H524.5H525.5V591.5H526.5V593.5H527.5V566.5H528.5V593.5H529.5V592.5H530.5V594.5H531.5V592.5H532.5V530.5H533.5V592.5H534.5V590.5H535.5V594.5H536.5V591.5H537.5V592.5H538.5V580.5H539.5V592.5H540.5V590.5H541.5V593.5H542.5V591.5H543.5V592.5H544.5V591.5H545.5V593.5H546.5V591.5H547.5H548.5V592.5H549.5V591.5H550.5V592.5H551.5V590.5H552.5V592.5H553.5V593.5H554.5V592.5H555.5H556.5V593.5H557.5V591.5H558.5V590.5H559.5V593.5H560.5V594.5H561.5V591.5H562.5H563.5H564.5V592.5H565.5V590.5H566.5V591.5H567.5H568.5V592.5H569.5V584.5H570.5V592.5H571.5V593.5H572.5V591.5H573.5V592.5H574.5H575.5V593.5H576.5H577.5V591.5H578.5V592.5H579.5H580.5V590.5H581.5V592.5H582.5V590.5H583.5H584.5H585.5V594.5H586.5V593.5H587.5H588.5V591.5H589.5V593.5H590.5V592.5H591.5V591.5H592.5V592.5H593.5V591.5H594.5V593.5H595.5H596.5V592.5H597.5V593.5H598.5V579.5H599.5V593.5H600.5V592.5H601.5V593.5H602.5V592.5H603.5V594.5H604.5V591.5H605.5H606.5V592.5H607.5V591.5H608.5V594.5H609.5H610.5V573.5H611.5V591.5H612.5V577.5H613.5V592.5H614.5V590.5H615.5V591.5H616.5V572.5H617.5V591.5H618.5V593.5H619.5V594.5H620.5V592.5H621.5H622.5V591.5H623.5V582.5H624.5V591.5H625.5V593.5H626.5V592.5H627.5V593.5H628.5H629.5V592.5H630.5V593.5H631.5V591.5H632.5V594.5H633.5V592.5H634.5V590.5H635.5V592.5H636.5V591.5H637.5H638.5V592.5H639.5H640.5V590.5H641.5V592.5H642.5V584.5H643.5V592.5H644.5V593.5H645.5V592.5H646.5V591.5H647.5V590.5H648.5V592.5H649.5V591.5H650.5V592.5H651.5V581.5H652.5V590.5H653.5V592.5H654.5H655.5V542.5H656.5V592.5H657.5H658.5V593.5H659.5V574.5H660.5V591.5H661.5H662.5V593.5H663.5V590.5H664.5V591.5H665.5V592.5H666.5V591.5H667.5V584.5H668.5V592.5H669.5V593.5H670.5V590.5H671.5V592.5H672.5V590.5H673.5V592.5H674.5H675.5V569.5H676.5V591.5H677.5H678.5V593.5H679.5H680.5V591.5H681.5V593.5H682.5V582.5H683.5H684.5V592.5H685.5H686.5V594.5H687.5V592.5H688.5V591.5H689.5V592.5H690.5V581.5H691.5V593.5H692.5H693.5V591.5H694.5V590.5H695.5V594.5H696.5V593.5H697.5H698.5V586.5H699.5V594.5H700.5H701.5V593.5H702.5V591.5H703.5V593.5H704.5H705.5H706.5V587.5H707.5V593.5H708.5H709.5V594.5H710.5V593.5H711.5V594.5H712.5V521.5H713.5V591.5H714.5H715.5V590.5H716.5H717.5V591.5H718.5V593.5H719.5V581.5H720.5V591.5H721.5V592.5H722.5H723.5V593.5H724.5V587.5H725.5V593.5H726.5V590.5H727.5V593.5H728.5H729.5H730.5V591.5H731.5V592.5H732.5H733.5V581.5H734.5V592.5H735.5V591.5H736.5V594.5H737.5V593.5H738.5H739.5V591.5H740.5V567.5H741.5H742.5V591.5H743.5V594.5H744.5H745.5V592.5H746.5H747.5V591.5H748.5V592.5H749.5V591.5H750.5V594.5H751.5V591.5H752.5H753.5V594.5H754.5V569.5H755.5V592.5H756.5H757.5H758.5V591.5H759.5V592.5H760.5V593.5H761.5V592.5H762.5V590.5H763.5V593.5H764.5H765.5V562.5H766.5V591.5H767.5V575.5H768.5V593.5H769.5V591.5H770.5V592.5H771.5H772.5V593.5H773.5V594.5H774.5V553.5H775.5V592.5H776.5V593.5H777.5H778.5V591.5H779.5V577.5H780.5V592.5H781.5V590.5H782.5V592.5H783.5V591.5H784.5V593.5H785.5V574.5H786.5V593.5H787.5V591.5H788.5V593.5H789.5V586.5H790.5V591.5H791.5V593.5H792.5V592.5H793.5V591.5H794.5V592.5H795.5H796.5H797.5V573.5H798.5V592.5H799.5V591.5H800.5H801.5V590.5H802.5V592.5H803.5V590.5H804.5V580.5H805.5V592.5H806.5V590.5H807.5V592.5H808.5H809.5V591.5H810.5H811.5H812.5H813.5V590.5H814.5V592.5H815.5V584.5H816.5V590.5H817.5V593.5H818.5V592.5H819.5V591.5H820.5H821.5V590.5H822.5V592.5H823.5V593.5H824.5V592.5H825.5V591.5H826.5V590.5H827.5V593.5H828.5V591.5H829.5H830.5V592.5H831.5V591.5H832.5H833.5V589.5H834.5V580.5H835.5V589.5H836.5V563.5H837.5H838.5V591.5H839.5V535.5H840.5V591.5H841.5V593.5H842.5V590.5H843.5V582.5H844.5V591.5H845.5H846.5H847.5V590.5H848.5V591.5H849.5V589.5H850.5V591.5H851.5H852.5H853.5V590.5H854.5H855.5V593.5H856.5V589.5H857.5V593.5H858.5V591.5H859.5H860.5H861.5V590.5H862.5V591.5H863.5H864.5V592.5H865.5V590.5H866.5V591.5H867.5H868.5H869.5V569.5H870.5V591.5H871.5V590.5H872.5V589.5H873.5V592.5H874.5V575.5H875.5V592.5H876.5V590.5H877.5H878.5V591.5H879.5H880.5V581.5H881.5V590.5H882.5H883.5H884.5V573.5H885.5V589.5H886.5V592.5H887.5V579.5H888.5V591.5H889.5H890.5V590.5H891.5V592.5H892.5V589.5H893.5V584.5H894.5V592.5H895.5V590.5H896.5H897.5V591.5H898.5V582.5H899.5V591.5H900.5V590.5H901.5V564.5H902.5V587.5H903.5V589.5H904.5V587.5H905.5H906.5V588.5H907.5V587.5H908.5H909.5V586.5H910.5H911.5V585.5H912.5V587.5H913.5H914.5V586.5H915.5V584.5" fill="none" stroke="#0000f8" stroke-width="1"/><rect x="224" y="208.5" width="2.4" height="218" fill="#0000f8"/></g>
<text x="887" y="189" font-family="Liberation Serif" font-style="italic" font-weight="bold" font-size="24.500" fill="#858585">S</text>
<text x="900.500" y="189" font-family="Liberation Serif" font-style="italic" font-size="16" fill="#858585">+</text>
</svg>
<div class="yl" style="top:162.0px">10.0</div><div class="yl" style="top:188.0px">0.0</div><div class="yl" style="top:214.0px">-10.0</div><div class="yl" style="top:240.0px">-20.0</div><div class="yl" style="top:266.0px">-30.0</div><div class="yl" style="top:293.0px">-40.0</div><div class="yl" style="top:319.0px">-50.0</div><div class="yl" style="top:345.0px">-60.0</div><div class="yl" style="top:371.0px">-70.0</div><div class="yl" style="top:397.0px">-80.0</div><div class="yl" style="top:424.0px">-90.0</div><div class="yl" style="top:450.0px">-100.0</div><div class="yl" style="top:476.0px">-110.0</div><div class="yl" style="top:502.0px">-120.0</div><div class="yl" style="top:528.0px">-130.0</div><div class="yl" style="top:555.0px">-140.0</div><div class="yl" style="top:581.0px">-150.0</div><div class="yl" style="top:607.0px">-160.0</div><div class="yl" style="top:633.0px">-170.0</div><div class="yl" style="top:660.0px">-180.0</div>
<div class="xl" style="left:94.5px">8.0k</div><div class="xl" style="left:146.5px">9.0k</div><div class="xl" style="left:194.0px">10.0k</div><div class="xl" style="left:501.5px">20.0k</div><div class="xl" style="left:681.0px">30.0k</div><div class="xl" style="left:808.7px">40.0k</div>
<div class="lbl" style="left:-14px;top:416px;width:60px;text-align:center;font-size:13.5px;line-height:14px;transform:rotate(-90deg)">dBV rms</div>
<div class="lbl" style="left:471px;top:694px;font-size:12px;line-height:14px">Frequency (Hz)</div>

<!-- annotations -->
<div class="a" style="left:322px;top:325px;font-size:21px;line-height:24px;white-space:nowrap">AD8065<br><span style="letter-spacing:-0.27px">Uвых = 5.5V</span><br><span style="letter-spacing:-0.12px">Rн = 510 Om</span></div>

<!-- measurement windows -->
<div class="mw" style="left:276px;top:196px;width:219px;background:linear-gradient(to bottom,#3c84f4 0,#0d62ec 3px,#0a5ce6 12px,#0e64f0 20px,#0c5ee4 24px,#0a54da 100%);box-shadow:inset 1px 1px 0 #1844c8,inset -1px -1px 0 #0a2a9a">
  <div class="ti" style="color:#fff">THD</div>
  <div class="x" style="left:200px;background:linear-gradient(135deg,#e28a70,#c8442a 55%,#b83a20)"><svg class="a" style="left:0;top:0" width="11" height="11" viewBox="0 0 11 11"><path d="M2.500 2.500 L8.500 8.500 M8.500 2.500 L2.500 8.500" stroke="#fff" stroke-width="2.100"/></svg></div>
  <div class="v" style="padding-left:1.3px">0.000143 %</div>
</div>
<div class="mw" style="left:571px;top:196px;width:203px;background:linear-gradient(to bottom,#8ea8e8 0,#7a96df 4px,#7893de 12px,#7e9de3 20px,#7a98e0 24px,#7690dc 100%);box-shadow:inset 1px 1px 0 #7088d8,inset -1px -1px 0 #6078c8">
  <div class="ti" style="color:#dbe6f9;transform:scaleX(1.085);transform-origin:0 0;left:4px">Peak Amplitude</div>
  <div class="x" style="left:184px;background:linear-gradient(135deg,#cf98a0,#be7a86 55%,#b87280);border-color:#e8eefb"><svg class="a" style="left:0;top:0" width="11" height="11" viewBox="0 0 11 11"><path d="M2.500 2.500 L8.500 8.500 M8.500 2.500 L2.500 8.500" stroke="#fff" stroke-width="2.100"/></svg></div>
  <div class="v" style="padding-left:12.5px">-5.27 dBV</div>
</div>

<!-- overlays panel -->
<div class="lbl" style="left:944px;top:154px;font-size:12px;line-height:14px;text-decoration:underline">Overlays</div>
<div class="lbl" style="left:919px;top:169px;width:22px;text-align:left;font-size:12px;line-height:14px;transform:rotate(-90deg)">Set</div>
<div class="lbl" style="left:934px;top:169px;width:22px;text-align:left;font-size:12px;line-height:14px;transform:rotate(-90deg)">On</div>
<div class="ob" style="top:189px">1</div><div class="oc" style="top:190px"></div><div class="ot" style="top:189px;color:#008000;letter-spacing:-0.2px">Overlay 1</div><div class="ob" style="top:205px">2</div><div class="oc" style="top:206px"></div><div class="ot" style="top:205px;color:#20a8a8;letter-spacing:-0.2px">Overlay 2</div><div class="ob" style="top:221px">3</div><div class="oc" style="top:222px"></div><div class="ot" style="top:221px;color:#800080;letter-spacing:-0.2px">Overlay 3</div><div class="ob" style="top:237px">4</div><div class="oc" style="top:238px"></div><div class="ot" style="top:237px;color:#ff00ff;letter-spacing:-0.2px">Overlay 4</div><div class="ob" style="top:253px">5</div><div class="oc" style="top:254px"></div><div class="ot" style="top:253px;color:#8b4513;letter-spacing:-0.2px">Overlay 5</div><div class="ob" style="top:269px">6</div><div class="oc" style="top:270px"></div><div class="ot" style="top:269px;color:#ff7f50;letter-spacing:-0.2px">Overlay 6</div><div class="ob" style="top:285px">C</div><div class="oc" style="top:286px"></div><div class="ot" style="top:285px;color:#000;letter-spacing:0.3px">Composite</div>
<div class="a" style="left:920px;top:302px;width:64px;height:18px;background:#ece9d8;box-shadow:inset 1px 1px 0 #fff,inset -1px -1px 0 #716f64,inset -2px -2px 0 #aca899;font-size:12px;line-height:18px;text-align:center;padding-right:2px">Options...</div>

<!-- +/- boxes -->
<div class="a" style="left:932px;top:696px;width:10px;height:10px;border:1px solid #000;background:#f4f2e6"><div class="a" style="left:1px;top:3px;width:6px;height:1px;background:#302040"></div><div class="a" style="left:3px;top:1px;width:1px;height:6px;background:#302040"></div></div>
<div class="a" style="left:1008px;top:696px;width:10px;height:10px;border:1px solid #000;background:#f4f2e6"><div class="a" style="left:2px;top:3px;width:4px;height:1px;background:#403020"></div></div>

<!-- status bar -->
<div class="a" style="left:2px;top:709px;width:1020px;height:2px;background:#fff"></div><div class="a" style="left:2px;top:711px;width:1020px;height:1px;background:#f3f0e0"></div>
<div class="sp" style="left:5px;width:120px">Stopped</div>
<div class="sp" style="left:126px;width:101px">Real Time</div>
<div class="sp" style="left:229px;width:71px">96000 Hz</div>
<div class="sp" style="left:302px;width:51px">24 Bit</div>
<div class="sp" style="left:355px;width:50px">Stereo</div>
<div class="sp" style="left:407px;width:102px">FFT 524288 pts</div>
<div class="sp" style="left:510px;width:74px">Hanning</div>
<div class="sp" style="left:586px;width:434px"></div>

<!-- taskbar -->
<div class="a" style="left:0;top:737px;width:1024px;height:1px;background:#fff"></div>
<div class="a" style="left:0;top:738px;width:1024px;height:30px;background:linear-gradient(to bottom,#3168d5 0,#4993e6 2px,#2f6fdc 4px,#245ddb 8px,#2459d6 20px,#2050c6 27px,#1941a5 30px)"></div>
<div class="a" style="left:0;top:738px;width:96px;height:30px;border-radius:0 9px 9px 0 / 0 15px 15px 0;background:linear-gradient(to bottom,#3a8a3a 0,#5fb85f 3px,#3f9c3f 7px,#3a963a 18px,#2f842f 27px,#266f26 30px);box-shadow:inset -3px 0 4px rgba(0,50,0,.45)">
  <div class="a" style="left:10px;top:6px"><svg width="22" height="20" viewBox="0 0 22 20"><path d="M2 3.500 C4.500 2 7 2 9.500 3.500 L8.500 9 C6 7.500 3.500 7.500 1 9 Z" fill="#e8542c"/><path d="M10.800 4 C13.500 5.500 16 5.500 19 4 L18 9.500 C15 11 12.500 11 9.800 9.500 Z" fill="#7cc142"/><path d="M0.800 10.300 C3.300 8.800 5.800 8.800 8.300 10.300 L7.300 16 C4.800 14.500 2.300 14.500 -0.200 16 Z" fill="#3b78e0"/><path d="M9.500 10.800 C12.200 12.300 14.800 12.300 17.800 10.800 L16.800 16.500 C13.800 18 11.300 18 8.500 16.500 Z" fill="#f6c22d"/></svg></div>
  <div class="a" style="left:35px;top:4px;color:#fff;font-size:17.5px;line-height:22px;font-weight:bold;font-style:italic;text-shadow:1px 1px 1px #1c4a1c">пуск</div>
</div>
<div class="tk" style="left:105px;width:160px;background:#1e52b7;box-shadow:inset 1px 1px 1px #143a8c,inset -1px -1px 0 #3a6ad0"><div class="a" style="left:11px;top:3px"><svg width="16" height="16" viewBox="0 0 16 17"><rect x="0.500" y="0.500" width="15" height="16" fill="#fff" stroke="#222"/><path d="M3.500 1 V12 M6.500 1 V12 M9.500 1 V12 M12.500 1 V12 M1 3.500 H15 M1 6.500 H15 M1 9.500 H15" stroke="#bbb" stroke-width="1"/><path d="M1.500 4.500 L4 4 L5.500 6.500 L7.500 4.500 L9 7.500 L11 4 L12.500 6.500 L14 9" fill="none" stroke="#e02020" stroke-width="1.3"/><path d="M1.500 6 L4.500 5.500 L6 8 L8 6 L10 9 L11.500 5.500 L13 9 L14.500 12" fill="none" stroke="#1010e0" stroke-width="1.400"/><text x="8" y="15" text-anchor="middle" font-family="Liberation Serif" font-style="italic" font-weight="bold" font-size="8" fill="#000">SC</text></svg></div><div class="a" style="left:30px;top:1px;font-size:11px;transform:scaleX(.93);transform-origin:0 0">SpectraPLUS-SC Sou…</div></div>
<div class="tk" style="left:267px;width:157px;background:linear-gradient(to bottom,#5a97f6 0,#3c81f3 3px,#3a7df0 18px,#3070e0 24px);box-shadow:inset -1px -1px 0 #2a5ec8"><div class="a" style="left:10px;top:3px"><svg width="16" height="18" viewBox="0 0 16 18"><path d="M3 7 L13 7 L11.500 16.500 H4.500 Z" fill="#dde4ee" stroke="#8090a8" stroke-width="0.8"/><path d="M5 8 L3.500 1.500" stroke="#d04020" stroke-width="1.600"/><path d="M8 8 L8.500 1" stroke="#e0a020" stroke-width="1.600"/><path d="M10.500 8 L13 2" stroke="#30a030" stroke-width="1.600"/><path d="M6.500 9 L6 3" stroke="#3060d0" stroke-width="1.300"/></svg></div><div class="a" style="left:28px;top:1px;font-size:11px;transform:scaleX(.975);transform-origin:0 0">AD8065-1кГц.PNG - …</div></div>
<div class="a" style="left:802px;top:744px;width:16px;height:16px;background:#3a6fd8;color:#fff;font-size:11px;line-height:16px;text-align:center">RU</div>
<svg class="a" style="left:824px;top:745px" width="17" height="14" viewBox="0 0 17 14"><path d="M5 0.500 H12" stroke="#000" stroke-dasharray="1 1"/><rect x="0.500" y="3.500" width="16" height="9" rx="1.500" fill="#fff" stroke="#000"/><path d="M2 6.500 H15 M2 8.500 H15" stroke="#000" stroke-dasharray="1 1"/><path d="M3 10.500 H14" stroke="#000"/></svg>
<div class="a" style="left:860px;top:738px;width:164px;height:30px;background:linear-gradient(to bottom,#1a6fc8 0,#3aa4f0 2px,#1d96ec 5px,#1290e8 10px,#0f8ae4 20px,#0d7ad2 27px,#0a5cae 30px);border-left:1px solid #0a3a8a;box-shadow:inset 1px 0 0 #4ab4f8"></div>
<svg style="position:absolute;left:869px;top:744px" width="18" height="18" viewBox="0 0 18 18"><rect x="6.500" y="1.500" width="8" height="6" fill="#5a6a9c" stroke="#232a4a"/><rect x="1.500" y="4.500" width="7" height="6.500" fill="#6a7cb0" stroke="#232a4a"/><ellipse cx="5" cy="13.500" rx="3.500" ry="1.500" fill="#c4cce4"/><path d="M9 9 L16 16 M16 9 L9 16" stroke="#e8201c" stroke-width="2.300"/></svg><svg style="position:absolute;left:888px;top:744px" width="18" height="18" viewBox="0 0 18 18"><circle cx="8" cy="8.500" r="7.500" fill="#0a0a0a"/><path d="M5 12 A4.800 4.800 0 1 1 12.500 6" fill="none" stroke="#22b4f4" stroke-width="1.800"/><circle cx="12" cy="13" r="4" fill="#2aa0f0"/><rect x="11.400" y="11.800" width="1.300" height="3.500" fill="#fff"/><rect x="11.400" y="10.200" width="1.300" height="1.100" fill="#fff"/></svg><svg style="position:absolute;left:904px;top:744px" width="20" height="18" viewBox="0 0 20 18"><ellipse cx="8" cy="7" rx="6" ry="6.500" fill="#6e6e6e" stroke="#3a3a3a" transform="rotate(-20 8 7)"/><ellipse cx="7.500" cy="6.500" rx="3.300" ry="3.800" fill="#b4b4b4" stroke="#505050" transform="rotate(-20 8 7)"/><ellipse cx="7" cy="6" rx="1.500" ry="1.800" fill="#e4e4e4"/><path d="M10 15.500 C13 15 15.500 13 17 10.500 M11.500 17 C14 16.500 16.500 14.500 18 12.500" fill="none" stroke="#a8b8f0" stroke-width="1"/></svg><svg style="position:absolute;left:924px;top:744px" width="18" height="18" viewBox="0 0 18 18"><path d="M3.500 10 L12 6.500 L14.500 10.500 L6 14.500 Z" fill="#a8a8a8" stroke="#444"/><path d="M6 14.500 L14.500 10.500 V12.500 L6 16.500 Z" fill="#6a6a6a"/><path d="M6 11 L11 9 L12 10.500 L7 12.500 Z" fill="#dadada"/><path d="M1.500 4.500 L5 1 L5.500 3.500 L9.500 2 L10 6 L6.500 6.500 L7 8.500 Z" fill="#30c020" stroke="#0a7a0a" stroke-width="0.700"/></svg><svg style="position:absolute;left:941px;top:744px" width="19" height="18" viewBox="0 0 19 18"><circle cx="8.500" cy="8.500" r="7.800" fill="#14a060"/><path d="M4.500 11 V9.500 M7 11 V8 M9.500 11 V6.500 M12 11 V5" stroke="#e0f4e4" stroke-width="1.500"/><circle cx="13" cy="13" r="4.200" fill="#6a1a98"/><circle cx="13" cy="13" r="1.500" fill="#fff"/></svg><svg style="position:absolute;left:960px;top:744px" width="18" height="18" viewBox="0 0 18 18"><path d="M1 2 H6.500 V8 L11 2 H15 L8.500 9.500 L12 13 L8 16 L6.500 12 V16 H1 Z" fill="#fff"/><path d="M1 2 H5.500 V9 L11.500 2 H14.500 L7.500 10 L5.500 12 V16 H1 Z" fill="#e8202c"/><path d="M8.500 10 L11 9 L14.500 12.500 V16 H10 L11 13.500 Z" fill="#2a2a2a"/></svg>
<div class="a" style="left:984px;top:746px;color:#fff;font-size:11px;line-height:14px">14:48</div>
</body></html>
